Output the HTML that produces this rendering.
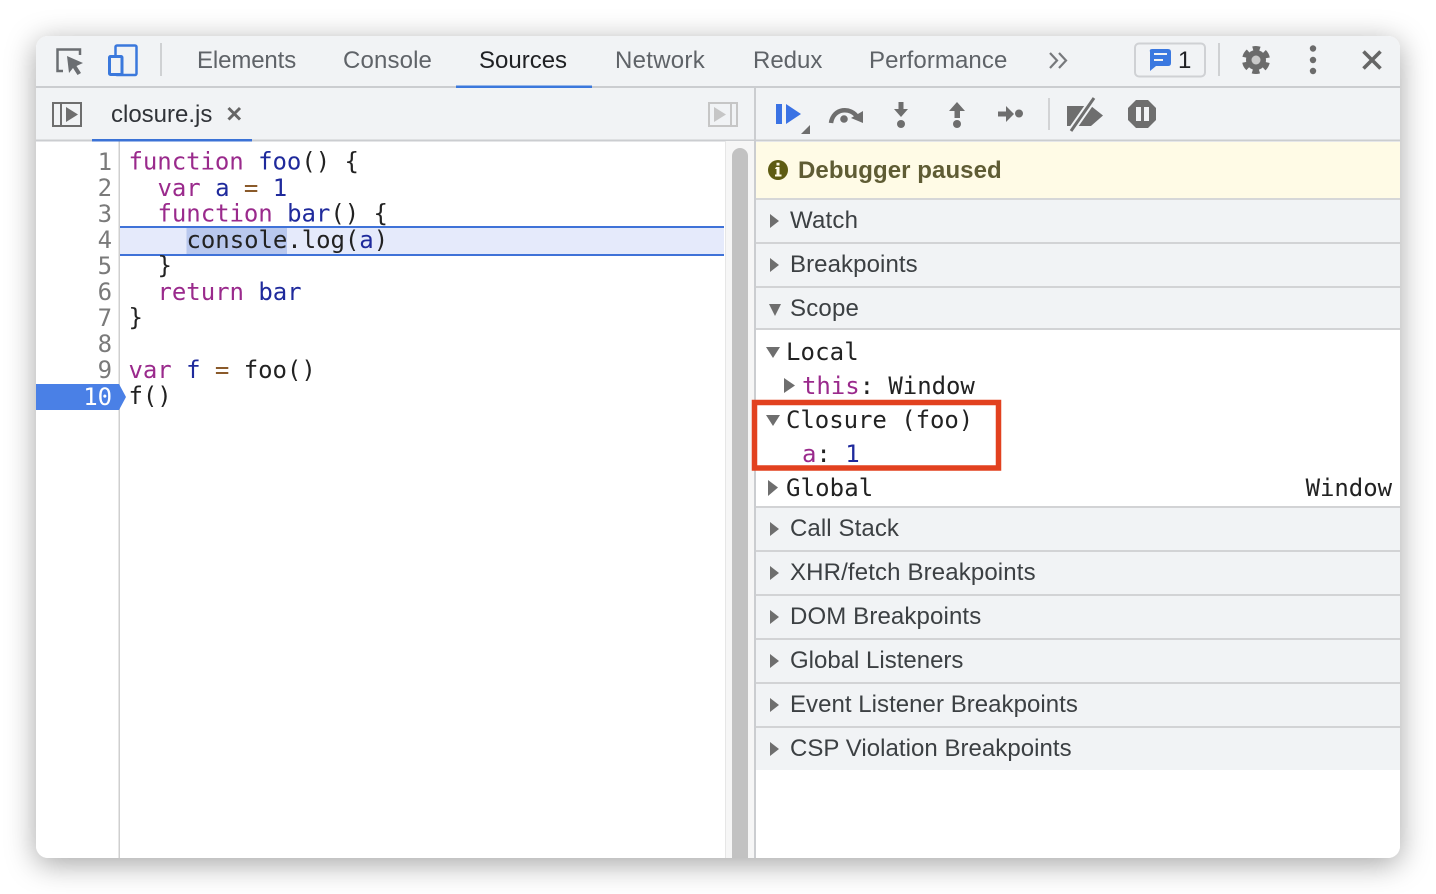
<!DOCTYPE html>
<html lang="en"><head><meta charset="utf-8"><title>DevTools Sources</title>
<style>
html,body{margin:0;padding:0;background:#fff;width:1436px;height:894px;overflow:hidden}
#win{position:absolute;left:36px;top:36px;width:1364px;height:822px;border-radius:12px;box-shadow:0 6px 30px rgba(0,0,0,.36)}
svg{position:absolute;left:0;top:0}
text{white-space:pre}
.s{font:24px "Liberation Sans",Arial,sans-serif;fill:#3c4043}
.t{font:24px "Liberation Sans",Arial,sans-serif;fill:#5f6368}
.m{font:24px "DejaVu Sans Mono","Liberation Mono",monospace;letter-spacing:-.05px;fill:#222}
.n{fill:#7a7a7a;text-anchor:end}
.k{fill:#9a2a8c}.b{fill:#1f2a9c}.o{fill:#8a5a2a}
</style></head><body>
<div id="win"></div>
<svg width="1436" height="894" viewBox="0 0 1436 894" xmlns="http://www.w3.org/2000/svg">
<defs><clipPath id="c"><rect x="36" y="36" width="1364" height="822" rx="12"/></clipPath></defs>
<g clip-path="url(#c)">
<rect x="36" y="36" width="1364" height="822" fill="#fff"/>
<rect x="36" y="36" width="1364" height="105" fill="#f1f3f5"/>
<rect x="36" y="86" width="1364" height="2" fill="#cbcdd0"/>
<rect x="36" y="139.500" width="1364" height="2" fill="#cbcdd0"/>
<rect x="725" y="141" width="1" height="717" fill="#e6e6e6"/>
<rect x="726" y="141" width="28" height="717" fill="#f6f6f6"/>
<rect x="732" y="148" width="16" height="720" rx="8" fill="#c2c2c2"/>
<rect x="754" y="88" width="2" height="770" fill="#cbcdd0"/>
<rect x="118.500" y="141" width="1.500" height="717" fill="#cfcfcf"/>

<!-- top toolbar -->
<g fill="none" stroke="#6b6e72" stroke-width="2.500">
<path d="M63 71H57.500V49.500H80V55"/>
</g>
<path d="M67 56L83 63L76.500 66L81 73L77.500 75L73 68L69 73Z" fill="#6b6e72"/>
<rect x="115.500" y="45.500" width="21" height="29.500" rx="1.500" fill="none" stroke="#3a78dc" stroke-width="2.500"/>
<rect x="109.500" y="56.500" width="12.500" height="18" rx="1" fill="#f1f3f5" stroke="#3a78dc" stroke-width="3"/>
<rect x="160" y="43" width="2" height="33" fill="#cfd1d3"/>
<text class="t" x="197" y="68" style="letter-spacing:-.12px">Elements</text>
<text class="t" x="343" y="68" style="letter-spacing:.14px">Console</text>
<text class="t" x="479" y="68" style="fill:#202124">Sources</text>
<text class="t" x="615" y="68" style="letter-spacing:.28px">Network</text>
<text class="t" x="753" y="68">Redux</text>
<text class="t" x="869" y="68" style="letter-spacing:.09px">Performance</text>
<rect x="456" y="85.500" width="136" height="2.500" fill="#3b78dc"/>
<path d="M1050 53L1057 60.500L1050 68M1059 53L1066 60.500L1059 68" fill="none" stroke="#77797c" stroke-width="2.200"/>
<rect x="1135" y="43.500" width="70" height="33" rx="4" fill="#f1f3f5" stroke="#cfd1d4" stroke-width="2"/>
<path d="M1152 49H1168Q1171 49 1171 52V63Q1171 66 1168 66H1156L1150 71V52Q1149 49 1152 49Z" fill="#3a78e0"/>
<path d="M1154 54H1167M1154 60H1163" stroke="#f1f3f5" stroke-width="2"/>
<text class="s" x="1178" y="68" style="fill:#202124">1</text>
<rect x="1218" y="43" width="2" height="33" fill="#cfd1d3"/>
<circle cx="1256" cy="60" r="10" fill="#6b6b6b"/>
<circle cx="1256" cy="60" r="11.500" fill="none" stroke="#6b6b6b" stroke-width="5" stroke-dasharray="7 5.040" stroke-dashoffset="-2.520"/>
<circle cx="1256" cy="60" r="4.500" fill="#c9c9c9"/>
<g fill="#6b6b6b"><circle cx="1313" cy="48.500" r="3.200"/><circle cx="1313" cy="60" r="3.200"/><circle cx="1313" cy="71" r="3.200"/></g>
<path d="M1363.500 51.500L1380.500 68.500M1380.500 51.500L1363.500 68.500" stroke="#666" stroke-width="3.600"/>

<!-- second toolbar left -->
<rect x="53" y="103" width="28" height="23" fill="none" stroke="#6e6e6e" stroke-width="2"/>
<rect x="60" y="103" width="2" height="23" fill="#6e6e6e"/>
<path d="M66 107L78 114.500L66 122Z" fill="#6e6e6e"/>
<text class="s" x="111" y="122" style="fill:#303338">closure.js</text>
<path d="M228.500 108L240 119.500M240 108L228.500 119.500" stroke="#666" stroke-width="3"/>
<rect x="92" y="139" width="160" height="2.500" fill="#3b72d6"/>
<rect x="709" y="103" width="28" height="23" fill="none" stroke="#c6c6c6" stroke-width="2"/>
<rect x="730" y="103" width="2" height="23" fill="#c6c6c6"/>
<path d="M726 107L714 114.500L726 122Z" fill="#c6c6c6" transform="rotate(180 720 114.500)"/>

<!-- debugger toolbar -->
<rect x="776" y="104" width="6" height="20" fill="#3a72e4"/>
<path d="M786 104L801 114L786 124Z" fill="#3a72e4"/>
<path d="M801 134H810V125Z" fill="#6e6e6e"/>
<path d="M831 123C833 108 851 106 858 118" fill="none" stroke="#6e6e6e" stroke-width="4.500"/>
<path d="M851 118L863 123L863 111Z" fill="#6e6e6e"/>
<circle cx="844" cy="119" r="3.800" fill="#6e6e6e"/>
<path d="M898.500 102H903.500V109H908L901 117L894 109H898.500Z" fill="#6e6e6e"/>
<circle cx="901" cy="124" r="4" fill="#6e6e6e"/>
<path d="M957 102L965 111H960V118H954.500V111H949Z" fill="#6e6e6e"/>
<circle cx="957" cy="124" r="4" fill="#6e6e6e"/>
<path d="M998 111.500H1006V106L1014 114L1006 122V116.500H998Z" fill="#6e6e6e"/>
<circle cx="1019" cy="113.500" r="4" fill="#6e6e6e"/>
<rect x="1048" y="98" width="2" height="32" fill="#d2d3d5"/>
<path d="M1067 106H1091L1103 115.500L1091 126H1067Z" fill="#6e6e6e"/>
<path d="M1094 98L1071 131" stroke="#f1f3f5" stroke-width="7"/>
<path d="M1094 98L1071 131" stroke="#6e6e6e" stroke-width="3"/>
<path d="M1136 100H1148L1156 108V120L1148 128H1136L1128 120V108Z" fill="#6e6e6e"/>
<rect x="1136" y="107" width="5" height="14" fill="#f1f3f5"/><rect x="1144" y="107" width="5" height="14" fill="#f1f3f5"/>

<!-- debugger paused -->
<rect x="756" y="142" width="644" height="56" fill="#fffbe6"/>
<rect x="756" y="198" width="644" height="2" fill="#d6d7d8"/>
<circle cx="778" cy="170" r="10" fill="#5e5c12"/>
<path d="M776 167H779.500V174.500H781.500V176.500H775V174.500H776.500V169H775ZM776.500 162.800H779.500V165.500H776.500Z" fill="#fffbe6"/>
<text x="798" y="178" style="font:bold 24px 'Liberation Sans',Arial,sans-serif;fill:#5f5c34;letter-spacing:.07px">Debugger paused</text>

<!-- section headers -->
<g fill="#f1f3f5">
<rect x="756" y="200" width="644" height="42"/><rect x="756" y="244" width="644" height="42"/><rect x="756" y="288" width="644" height="41"/>
<rect x="756" y="508" width="644" height="42"/><rect x="756" y="552" width="644" height="42"/><rect x="756" y="596" width="644" height="42"/>
<rect x="756" y="640" width="644" height="42"/><rect x="756" y="684" width="644" height="42"/><rect x="756" y="728" width="644" height="42"/>
</g>
<g fill="#d2d3d5">
<rect x="756" y="242" width="644" height="2"/><rect x="756" y="286" width="644" height="2"/><rect x="756" y="328" width="644" height="2"/>
<rect x="756" y="506" width="644" height="2"/><rect x="756" y="550" width="644" height="2"/><rect x="756" y="594" width="644" height="2"/>
<rect x="756" y="638" width="644" height="2"/><rect x="756" y="682" width="644" height="2"/><rect x="756" y="726" width="644" height="2"/>
</g>
<g fill="#6e6e6e">
<path d="M770 214L779 221L770 228Z"/><path d="M770 258L779 265L770 272Z"/><path d="M769 304H781L775 316Z"/>
<path d="M770 522L779 529L770 536Z"/><path d="M770 566L779 573L770 580Z"/><path d="M770 610L779 617L770 624Z"/>
<path d="M770 654L779 661L770 668Z"/><path d="M770 698L779 705L770 712Z"/><path d="M770 742L779 749L770 756Z"/>
</g>
<text class="s" x="790" y="228" style="letter-spacing:.2px">Watch</text>
<text class="s" x="790" y="272" style="letter-spacing:.09px">Breakpoints</text>
<text class="s" x="790" y="316" style="letter-spacing:.2px">Scope</text>
<text class="s" x="790" y="536" style="letter-spacing:.1px">Call Stack</text>
<text class="s" x="790" y="580" style="letter-spacing:.14px">XHR/fetch Breakpoints</text>
<text class="s" x="790" y="624" style="letter-spacing:.13px">DOM Breakpoints</text>
<text class="s" x="790" y="668">Global Listeners</text>
<text class="s" x="790" y="712" style="letter-spacing:.04px">Event Listener Breakpoints</text>
<text class="s" x="790" y="756" style="letter-spacing:.04px">CSP Violation Breakpoints</text>

<!-- scope -->
<g fill="#6e6e6e">
<path d="M766 347H780L773 358Z"/><path d="M784 378L795 385.500L784 393Z"/>
<path d="M766 415H780L773 426Z"/><path d="M768 480L778 487.500L768 496Z"/>
</g>
<text class="m" x="786" y="360" style="letter-spacing:.1px">Local</text>
<text class="m" x="802" y="394"><tspan class="k">this</tspan>: Window</text>
<text class="m" x="786" y="428">Closure (foo)</text>
<text class="m" x="802" y="462"><tspan class="k">a</tspan>: <tspan class="b">1</tspan></text>
<text class="m" x="786" y="496" style="letter-spacing:.1px">Global</text>
<text class="m" x="1392" y="496" text-anchor="end">Window</text>
<rect x="754.500" y="402.500" width="244" height="65.500" fill="none" stroke="#e2411f" stroke-width="5.500"/>

<!-- code -->
<rect x="120" y="227" width="604" height="28" fill="#e5eafb"/>
<rect x="186.500" y="227" width="100.500" height="28" fill="#b9c8ee"/>
<rect x="120" y="226" width="604" height="2" fill="#3f72d8"/>
<rect x="120" y="254" width="604" height="2" fill="#3f72d8"/>
<path d="M36 384H119L126 397L119 410H36Z" fill="#4a80e6"/>
<g class="m">
<text class="m n" x="112" y="170">1</text><text class="m n" x="112" y="196">2</text><text class="m n" x="112" y="222">3</text><text class="m n" x="112" y="248">4</text><text class="m n" x="112" y="274">5</text><text class="m n" x="112" y="300">6</text><text class="m n" x="112" y="326">7</text><text class="m n" x="112" y="352">8</text><text class="m n" x="112" y="378">9</text>
<text class="m n" x="112" y="405" style="fill:#fff">10</text>
<text class="m" x="128.500" y="169.700"><tspan class="k">function</tspan> <tspan class="b">foo</tspan>() {</text>
<text class="m" x="157.500" y="196"><tspan class="k">var</tspan> <tspan class="b">a</tspan> <tspan class="o">=</tspan> <tspan class="b">1</tspan></text>
<text class="m" x="157.500" y="221.700"><tspan class="k">function</tspan> <tspan class="b">bar</tspan>() {</text>
<text class="m" x="186.500" y="248">console.log(<tspan class="b">a</tspan>)</text>
<text class="m" x="157.500" y="273.700">}</text>
<text class="m" x="157.500" y="300"><tspan class="k">return</tspan> <tspan class="b">bar</tspan></text>
<text class="m" x="128.500" y="325.700">}</text>
<text class="m" x="128.500" y="378"><tspan class="k">var</tspan> <tspan class="b">f</tspan> <tspan class="o">=</tspan> foo()</text>
<text class="m" x="128.500" y="404">f()</text>
</g>
</g>
</svg>
</body></html>
